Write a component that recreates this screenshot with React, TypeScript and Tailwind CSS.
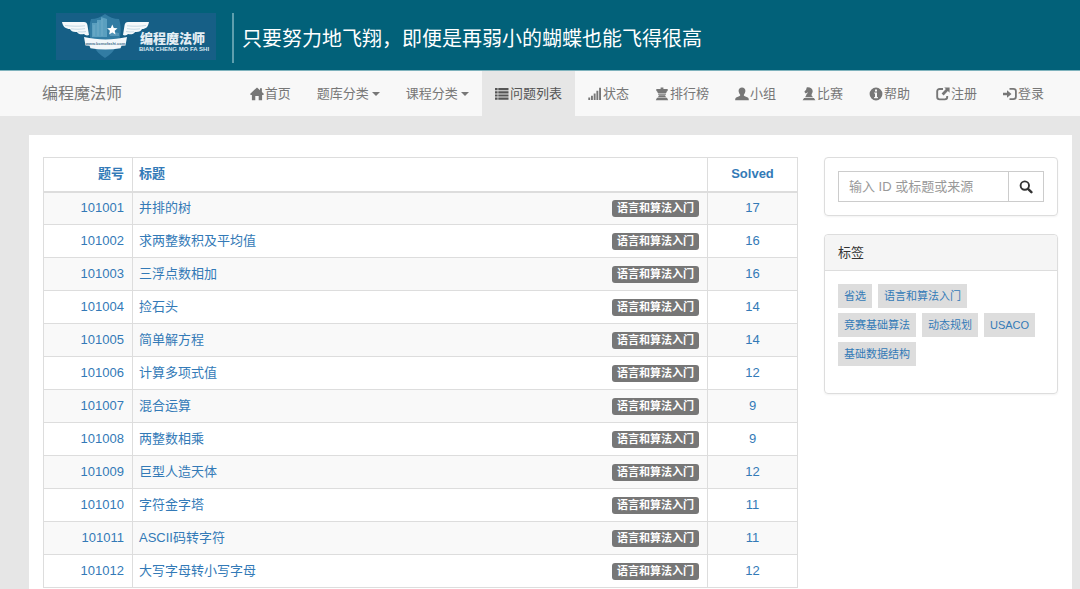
import React, { useState } from 'react'

type Problem = { id: number; title: string; solved: number }

const problems: Problem[] = [
  { id: 101001, title: '并排的树', solved: 17 },
  { id: 101002, title: '求两整数积及平均值', solved: 16 },
  { id: 101003, title: '三浮点数相加', solved: 16 },
  { id: 101004, title: '捡石头', solved: 14 },
  { id: 101005, title: '简单解方程', solved: 14 },
  { id: 101006, title: '计算多项式值', solved: 12 },
  { id: 101007, title: '混合运算', solved: 9 },
  { id: 101008, title: '两整数相乘', solved: 9 },
  { id: 101009, title: '巨型人造天体', solved: 12 },
  { id: 101010, title: '字符金字塔', solved: 11 },
  { id: 101011, title: 'ASCII码转字符', solved: 11 },
  { id: 101012, title: '大写字母转小写字母', solved: 12 },
]

const tags = ['省选', '语言和算法入门', '竞赛基础算法', '动态规划', 'USACO', '基础数据结构']

function Icon({ children }: { children: React.ReactNode }) {
  return (
    <svg viewBox="0 0 14 14" className="h-[14px] w-[14px] shrink-0" fill="currentColor" aria-hidden="true">
      {children}
    </svg>
  )
}

const icons = {
  home: (
    <Icon>
      <path d="M7 .4 10 3.200V1.300h1.900V5l2.100 2.100-.8.9h-1.100v5.200H8.700V9H5.300v4.200H1.900V8H.8L0 7.100z" />
    </Icon>
  ),
  list: (
    <Icon>
      <path d="M0 1h2.600v2.200H0zM3.300 1H13.500v2.200H3.300zM0 4.200h2.600v2.200H0zM3.300 4.200h10.200v2.200H3.300zM0 7.400h2.600v2.200H0zM3.300 7.400h10.200v2.200H3.300zM0 10.600h2.600v2.200H0zM3.300 10.600h10.200v2.200H3.300z" />
    </Icon>
  ),
  signal: (
    <Icon>
      <path d="M.3 10.400h1.900V13H.3zM3 8.800h1.900V13H3zM5.700 6.400h1.900V13H5.700zM8.400 3.700h1.900V13H8.400zM11.100.8H13V13h-1.900z" />
    </Icon>
  ),
  queen: (
    <Icon>
      <path d="M5.600.4h2.800v1.700h4.300v1.600l-1.300 1.300v1H2.600V5L1.300 3.700V2.100h4.300zM3.100 6.600h7.800v1.200H3.100zM3.900 8.300h6.200l.9 2H3zM2 10.800h10l1.200 2.500H.8z" />
    </Icon>
  ),
  user: (
    <Icon>
      <path d="M7 .4c2.100 0 3.400 1.400 3.400 3.400 0 1.500-.7 2.800-1.400 3.600-.3.400-.3 1.100.1 1.400.6.600 3.200 1.200 4 1.900.6.500.7 1.300.7 2.600H.2c0-1.300.1-2.100.7-2.600.8-.7 3.400-1.300 4-1.900.4-.3.400-1 .1-1.400-.7-.8-1.400-2.100-1.400-3.600C3.600 1.800 4.900.4 7 .4z" />
    </Icon>
  ),
  knight: (
    <Icon>
      <path d="M4.700.4c3.300-.5 5.800 1.100 6 3.700.1 1.900-1.500 2.900-1.100 4.300l1.500 1.900H3.100l1-1.900C4.300 7 5.700 6.300 6.100 5.200L3.700 6.400 2.300 4.800l1.800-2.100zM2.100 10.900h9.800l1.500 2.400H.6z" />
    </Icon>
  ),
  info: (
    <Icon>
      <path
        fillRule="evenodd"
        d="M7 .6a6.400 6.400 0 1 1 0 12.800A6.400 6.400 0 0 1 7 .6zM6 2.500v1.900h2V2.500zM5.100 5.500v1.100H6v3.500h-.9v1.100h3.800v-1.100H8V5.500z"
      />
    </Icon>
  ),
  edit: (
    <Icon>
      <path
        d="M7 2H3.700C2.100 2 1.200 2.900 1.200 4.300v5.800c0 1.500.9 2.300 2.500 2.300h5.100c1.500 0 2.400-.8 2.400-2.300V9"
        fill="none"
        stroke="currentColor"
        strokeWidth="1.900"
      />
      <path d="M8.200.4h5.400v5.400l-1.700-1.700-4.300 4.300-2-2 4.300-4.300z" />
    </Icon>
  ),
  login: (
    <Icon>
      <path d="M4 3.300 8.500 7 4 10.700V8.200H0V5.800h4z" />
      <path
        d="M6.500 1.900h3.800c1.700 0 2.600.8 2.600 2.300v5.600c0 1.500-.9 2.300-2.600 2.300H6.500"
        fill="none"
        stroke="currentColor"
        strokeWidth="1.800"
      />
    </Icon>
  ),
}

const navItems = [
  { label: '首页', icon: icons.home },
  { label: '题库分类', caret: true },
  { label: '课程分类', caret: true },
  { label: '问题列表', icon: icons.list, active: true },
  { label: '状态', icon: icons.signal },
  { label: '排行榜', icon: icons.queen },
  { label: '小组', icon: icons.user },
  { label: '比赛', icon: icons.knight },
  { label: '帮助', icon: icons.info },
  { label: '注册', icon: icons.edit },
  { label: '登录', icon: icons.login },
]

function Logo() {
  return (
    <svg viewBox="0 0 160 47" className="h-[47px] w-[160px] shrink-0" role="img" aria-label="编程魔法师">
      <rect width="160" height="47" fill="#165f86" />
      <path d="M35 6c5 0 10-2 14-5 4 3 9 5 14 5 3 9 2 19-2 26-3 6-7 10-12 13-5-3-9-7-12-13-4-7-5-17-2-26z" fill="#327ca3" />
      <path d="M36 10h5V7h4V4l6 2v18H36z" fill="#5a9fbf" />
      <path d="M38 12v11M42 9v14M46 6v17" stroke="#7db6cf" strokeWidth=".7" />
      <path d="M54 23v-3l4-1 5 1v3z" fill="#5596b8" />
      <path d="m56.300 11.500 1.500 3.400 3.700.4-2.800 2.500.8 3.600-3.200-1.800-3.200 1.800.8-3.600-2.800-2.500 3.700-.4z" fill="#fff" />
      <path d="M6 9h22c2 0 3 1 3.400 3l1.600 10c-2 .8-4 .3-5-1-3 .8-6 0-7-2-4 .4-6-1-7-3-4 0-7-2-8-7z" fill="#f5f9fb" />
      <path d="M93 9H72c-2 0-3 1-3.400 3L67 22c2 .8 4 .3 5-1 3 .8 6 0 7-2 4 .4 6-1 7-3 4 0 6-2 7-7z" fill="#f5f9fb" />
      <path
        d="M9 12.500c7 .8 13 1 20 .3M15 15.800c5 .6 9 .6 14-.2M22 18.800c3 .3 5 .2 8-.2M90 12.500c-6 .8-12 1-19 .3M84 15.800c-4 .6-8 .6-13-.2M78 18.800c-3 .3-5 .2-8-.2"
        fill="none"
        stroke="#a4c4d5"
        strokeWidth=".6"
      />
      <path d="M28 24c14 3.200 29 3.200 43 0l-1.500 8.500-4 .2-1 2.600c-10 1.700-20 1.700-30 0l-1-2.600-4-.2z" fill="#f2f7fa" />
      <text x="49.500" y="31.500" textAnchor="middle" className="font-bold" fontSize="4" fill="#47758f">www.bcmofashi.com</text>
      <text x="84" y="30" className="font-black" fontSize="13" fill="#e4eef4">编程魔法师</text>
      <text x="83" y="38" className="font-bold" fontSize="6" fill="#dbe9f1">BIAN CHENG MO FA SHI</text>
    </svg>
  )
}

function Navbar() {
  return (
    <nav className="flex h-[46px] items-stretch justify-between border-t border-[#7fb3bd] bg-[#f8f8f8] pr-[23px] pl-[42px] text-[#777]">
      <a href="#" className="flex items-center text-[16px]">编程魔法师</a>
      <ul className="flex items-stretch text-[13px] leading-[18px]">
        {navItems.map((item) => (
          <li key={item.label} className="flex">
            <a
              href="#"
              className={`flex items-center gap-px px-[13px] whitespace-nowrap ${item.active ? 'bg-[#e6e6e6] text-[#555]' : ''}`}
            >
              {item.icon}
              {item.label}
              {item.caret && (
                <span className="ml-[2px] border-x-4 border-t-4 border-x-transparent border-t-current" />
              )}
            </a>
          </li>
        ))}
      </ul>
    </nav>
  )
}

function ProblemTable() {
  return (
    <table className="w-full table-fixed border-collapse border border-[#ddd] text-[13px] leading-[18px] text-[#337ab7]">
      <colgroup>
        <col className="w-[89px]" />
        <col />
        <col className="w-[90px]" />
      </colgroup>
      <thead>
        <tr className="h-[34px] border-b-2 border-[#ddd]">
          <th className="border-r border-[#ddd] px-2 text-right"><a href="#">题号</a></th>
          <th className="border-r border-[#ddd] px-[6px] text-left"><a href="#">标题</a></th>
          <th className="text-center"><a href="#">Solved</a></th>
        </tr>
      </thead>
      <tbody>
        {problems.map((p) => (
          <tr key={p.id} className="h-[33px] border-b border-[#ddd] odd:bg-[#f9f9f9]">
            <td className="border-r border-[#ddd] px-2 text-right"><a href="#">{p.id}</a></td>
            <td className="border-r border-[#ddd] pr-2 pl-[6px]">
              <div className="flex items-center justify-between">
                <a href="#">{p.title}</a>
                <a href="#" className="rounded-[3px] bg-[#777] px-[5px] text-[11px] leading-[17px] font-bold text-white">
                  语言和算法入门
                </a>
              </div>
            </td>
            <td className="text-center"><a href="#">{p.solved}</a></td>
          </tr>
        ))}
      </tbody>
    </table>
  )
}

function Sidebar() {
  const [query, setQuery] = useState('')

  return (
    <aside className="flex w-[234px] shrink-0 flex-col gap-[18px] text-[13px]">
      <form
        onSubmit={(e) => e.preventDefault()}
        className="flex rounded border border-[#ddd] px-[13px] py-[13px] shadow-xs"
      >
        <input
          type="text"
          aria-label="输入 ID 或标题或来源"
          placeholder="输入 ID 或标题或来源"
          value={query}
          onChange={(e) => setQuery(e.target.value)}
          className="h-[31px] min-w-0 flex-1 border border-[#ccc] px-[10px] text-[#555] placeholder:text-[#999]"
        />
        <button
          type="submit"
          aria-label="搜索"
          className="flex w-[35px] items-center justify-center border border-l-0 border-[#ccc] text-[#333]"
        >
          <Icon>
            <circle cx="5.800" cy="5.600" r="4.200" fill="none" stroke="currentColor" strokeWidth="1.900" />
            <path d="m9 8.800 3.400 3.400" fill="none" stroke="currentColor" strokeWidth="2.400" strokeLinecap="round" />
          </Icon>
        </button>
      </form>

      <section className="rounded border border-[#ddd] shadow-xs">
        <h2 className="rounded-t border-b border-[#ddd] bg-[#f5f5f5] px-[13px] py-[9px] leading-[17px] text-[#333]">标签</h2>
        <div className="flex flex-wrap gap-x-[6px] gap-y-[5px] px-[13px] pt-[13px] pb-[27px]">
          {tags.map((tag) => (
            <a key={tag} href="#" className="bg-[#ddd] px-[6px] text-[11px] leading-[24px] text-[#337ab7]">
              {tag}
            </a>
          ))}
        </div>
      </section>
    </aside>
  )
}

export default function App() {
  return (
    <div className="flex min-h-screen flex-col bg-[#e6e6e6] font-['Liberation_Sans','Noto_Sans_CJK_SC',sans-serif]">
      <header className="flex h-[70px] items-start bg-[#026179] pt-[13px] pl-14">
        <Logo />
        <div className="ml-4 flex h-[50px] items-center border-l-2 border-[#5f9fae] pt-[2px] pl-2 text-[20px] text-white">
          只要努力地飞翔，即便是再弱小的蝴蝶也能飞得很高
        </div>
      </header>
      <Navbar />
      <main className="mt-[19px] mr-2 ml-[29px] flex flex-1 items-start gap-[26px] bg-white px-[14px] pt-[22px]">
        <div className="min-w-0 flex-1">
          <ProblemTable />
        </div>
        <Sidebar />
      </main>
    </div>
  )
}
